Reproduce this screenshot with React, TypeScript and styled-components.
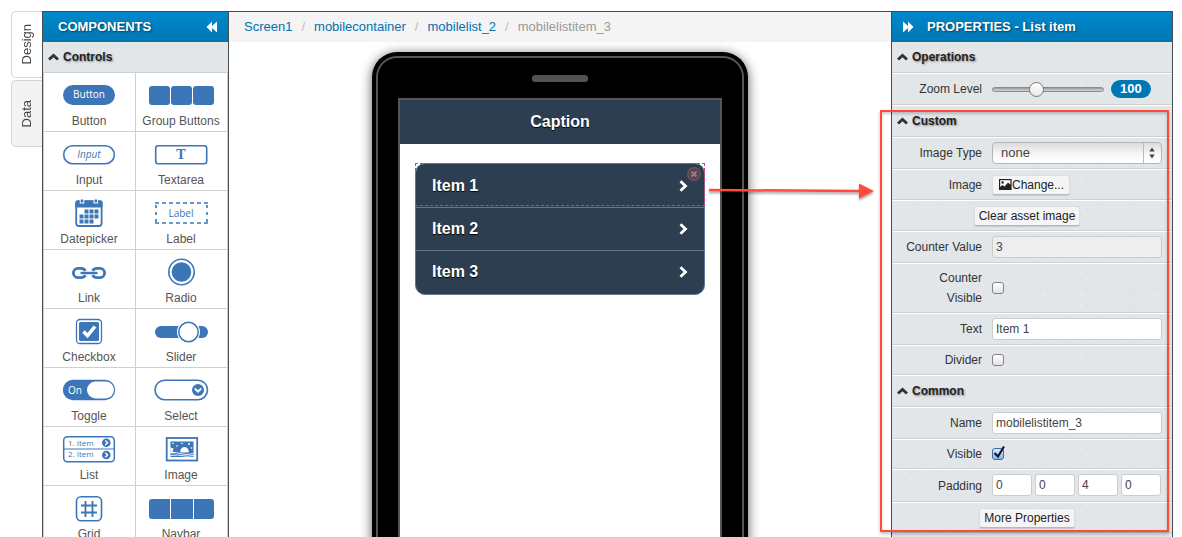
import React, { useState } from "react";
import styled, { createGlobalStyle, css } from "styled-components";

const blue = "#3c76b8";
const line = "#cfcfcf";
const dark = "#454c52";
const navy = "#2d3e50";
const red = "#ff4b38";

const GlobalStyle = createGlobalStyle`
  *, *::before, *::after { box-sizing: border-box; }
  body {
    margin: 0;
    background: #fff;
    color: #333;
    font: 12px/20px "Liberation Sans", Arial, Helvetica, sans-serif;
  }
  button, input, select { font: inherit; color: inherit; margin: 0; }
  button { padding: 0; border: 0; background: none; cursor: pointer; }
  ul, ol, h1, h2, h3 { margin: 0; padding: 0; list-style: none; font-size: inherit; }
  svg { display: block; }
`;

const Shell = styled.div`
  display: flex;
  height: 100vh;
  padding: 11px 9px 0 11px;
  overflow: hidden;
`;

const SideTabs = styled.nav`
  display: flex;
  flex-direction: column;
  gap: 2px;
  flex: 0 0 31px;
`;

const SideTab = styled.button<{ $active?: boolean }>`
  display: flex;
  align-items: center;
  justify-content: center;
  height: 67px;
  border: 1px solid #d6d6d6;
  border-right: 0;
  border-radius: 5px 0 0 5px;
  background: ${(p) => (p.$active ? "#fff" : "#f3f3f3")};
  color: #444;
  font-size: 13px;

  span {
    writing-mode: vertical-rl;
    transform: rotate(180deg);
  }
`;

const Workspace = styled.div`
  display: flex;
  flex: 1;
  min-width: 0;
  border: 1px solid ${dark};
  border-bottom: 0;
`;

const Panel = styled.section`
  position: relative;
  display: flex;
  flex-direction: column;
  min-height: 0;
`;

const ComponentsPanel = styled(Panel)`
  flex: 0 0 186px;
  overflow: hidden;
  border-right: 1px solid ${dark};
`;

const PropertiesPanel = styled(Panel)`
  flex: 0 0 281px;
  border-left: 1px solid ${dark};
  background: #e2e6e9;
`;

const PanelHeader = styled.header`
  display: flex;
  align-items: center;
  flex: 0 0 30px;
  gap: 13px;
  padding: 0 10px;
  background: linear-gradient(#0088cc, #0077b3);
  color: #fff;
  font-size: 13px;

  h2 { text-shadow: 1px 1px 2px rgba(0, 0, 0, 0.5); }
`;

const ComponentsHeader = styled(PanelHeader)`
  justify-content: space-between;
  padding: 0 10px 0 15px;
`;

const SectionTitle = styled.h3<{ $first?: boolean }>`
  flex: none;
  background: #e3e6e9;
  border-top: ${(p) => (p.$first ? "0" : "1px solid #fff")};
  border-bottom: 1px solid ${line};

  button {
    display: flex;
    align-items: center;
    gap: 4px;
    width: 100%;
    height: 30px;
    padding: 0 5px;
    color: #222;
    font-weight: bold;
    text-shadow: 1px 1px 2px rgba(0, 0, 0, 0.4);
  }
`;

const ComponentGrid = styled.div`
  display: grid;
  grid-template-columns: 92px 1fr;
  border: solid ${line};
  border-width: 0 1px;
`;

const ComponentCell = styled.button`
  display: flex;
  flex-direction: column;
  align-items: center;
  gap: 2px;
  height: 59px;
  padding: 8px 1px 0 0;
  border-bottom: 1px solid ${line};
  color: #555;
  white-space: nowrap;

  &:nth-child(odd) { border-right: 1px solid ${line}; }
`;

const Canvas = styled.main`
  display: flex;
  flex-direction: column;
  flex: 1;
  min-width: 0;
  overflow: hidden;
`;

const Breadcrumb = styled.ol`
  display: flex;
  flex: 0 0 30px;
  align-items: center;
  padding: 0 15px;
  background: #f4f4f4;
  color: #999;
  font-size: 13px;

  li + li::before {
    content: "/";
    padding: 0 9px;
    color: #bbb;
  }
  a { color: #0071b0; text-decoration: none; }
`;

const Stage = styled.div`
  display: flex;
  justify-content: center;
  align-items: flex-start;
  flex: 1;
  min-height: 0;
  padding-top: 10px;
`;

const Phone = styled.div`
  flex: 0 0 376px;
  padding: 4px;
  border-radius: 25px;
  background: #000;
  box-shadow: 0 2px 12px rgba(0, 0, 0, 0.65);
`;

const PhoneBezel = styled.div`
  display: flex;
  flex-direction: column;
  align-items: center;
  gap: 16px;
  padding: 17px 20px 60px;
  border: 2px solid #565656;
  border-radius: 21px;
`;

const Speaker = styled.div`
  width: 56px;
  height: 7px;
  border-radius: 3px;
  background: #525252;
`;

const Screen = styled.div`
  align-self: stretch;
  min-height: 480px;
  border: 2px solid #565656;
  background: #fff;
`;

const Caption = styled.h1`
  background: ${navy};
  color: #fff;
  font-size: 16px;
  line-height: 44px;
  text-align: center;
  text-shadow: 0 1px 1px #000;
`;

const ScreenBody = styled.div`
  padding: 19px 15px;
`;

const MobileList = styled.ul`
  position: relative;
  padding: 1px 0;
  border: 1px solid #5c7a95;
  border-radius: 10px;
  background: ${navy};
`;

const MobileItem = styled.li`
  & + & { border-top: 1px solid #5c7a95; }

  a {
    display: flex;
    align-items: center;
    justify-content: space-between;
    height: 42px;
    padding: 0 16px;
    color: #fff;
    font-size: 16px;
    font-weight: bold;
    text-decoration: none;
    text-shadow: 0 1px 1px #000;
  }
`;

const Selection = styled.div`
  position: absolute;
  inset: -1px -1px auto;
  height: 43px;
  border: 1px dashed #d43a86;
  pointer-events: none;
`;

const RemoveBadge = styled.button`
  position: absolute;
  top: 3px;
  right: 3px;
  opacity: 0.5;
  pointer-events: auto;
`;

const Row = styled.div<{ $centered?: boolean }>`
  display: flex;
  flex: none;
  align-items: center;
  gap: 10px;
  padding: 4px 10px 4px 12px;
  border-top: 1px solid #fff;
  border-bottom: 1px solid ${line};
  background:
    radial-gradient(circle, #dee2e8 0 1px, transparent 2px) 0 0 / 23px 17px,
    radial-gradient(circle, #dfe3e8 0 1px, transparent 2px) 5px 9px / 31px 13px,
    radial-gradient(circle, #e6e9ec 0 1px, transparent 2px) 9px 3px / 19px 11px,
    #e2e6e9;
  ${(p) => p.$centered && css`
    justify-content: center;
    padding-left: 0;
  `}
`;

const RowLabel = styled.label`
  flex: 0 0 78px;
  text-align: right;
`;

const field = css`
  height: 22px;
  border: 1px solid #ccc;
  border-radius: 3px;
  background: #fff;
  color: #444;
`;

const TextField = styled.input`
  ${field}
  flex: 1;
  min-width: 0;
  padding: 0 3px;
  &:disabled { background: #eee; }
`;

const PaddingFields = styled.div`
  display: grid;
  grid-template-columns: repeat(4, 40px);
  gap: 3px;
  padding-bottom: 1px;
`;

const SelectWrap = styled.div`
  position: relative;
  flex: 1;

  select {
    ${field}
    width: 100%;
    padding: 0 8px;
    appearance: none;
    border-color: #b5b5b5;
    border-radius: 4px;
    background: linear-gradient(#dcdcdc, #f8f8f8 60%, #fff);
    font-size: 13px;
  }
  svg {
    position: absolute;
    top: 1px;
    right: 1px;
    pointer-events: none;
  }
`;

const PushButton = styled.button`
  display: flex;
  align-items: center;
  height: 20px;
  padding: 0 4px;
  border: 1px solid #dcdcdc;
  border-bottom-color: #b9b9b9;
  border-radius: 3px;
  background: #f5f5f5;
  color: #222;
  white-space: nowrap;
  box-shadow: 0 1px 1px rgba(0, 0, 0, 0.12);
`;

const ImageButton = styled(PushButton)`
  padding: 0 5px 0 6px;
`;

const ButtonSlot = styled.div`
  display: flex;
  align-items: center;
  height: 21px;
`;

const CheckWrap = styled.span`
  position: relative;
  display: block;
  height: 12px;

  input {
    display: block;
    width: 12px;
    height: 12px;
    appearance: none;
    border: 1px solid #858585;
    border-radius: 3px;
    background: linear-gradient(#fff, #e4e4e4);
  }
  input:checked {
    border-color: #47689a;
    background: linear-gradient(#dcebfa, #86b8ec);
  }
  svg {
    position: absolute;
    left: 1px;
    bottom: 1px;
    pointer-events: none;
  }
`;

const ZoomSlot = styled.div`
  display: flex;
  align-items: center;
  gap: 7px;
  height: 22px;
`;

const thumb = css`
  appearance: none;
  box-sizing: border-box;
  width: 15px;
  height: 15px;
  margin-top: -6px;
  border: 1px solid #777;
  border-radius: 50%;
  background: linear-gradient(#fff, #e9e9e9);
`;

const Range = styled.input`
  width: 112px;
  height: 15px;
  appearance: none;
  background: transparent;

  &::-webkit-slider-runnable-track {
    height: 5px;
    border: 1px solid #8b8b8b;
    border-radius: 3px;
    background: linear-gradient(#9a9a9a, #d8d8d8);
  }
  &::-webkit-slider-thumb { ${thumb} }
`;

const ZoomValue = styled.output`
  padding: 0 9px;
  border-radius: 9px;
  background: #0077b3;
  color: #fff;
  font-size: 13px;
  font-weight: bold;
  line-height: 18px;
`;

const Callout = styled.div`
  position: absolute;
  top: 98px;
  left: -12px;
  right: 3px;
  height: 422px;
  border: 2px solid ${red};
  box-shadow: 0 2px 3px rgba(0, 0, 0, 0.25), inset 0 2px 3px rgba(0, 0, 0, 0.2);
  pointer-events: none;
`;

const CalloutArrow = styled.svg`
  position: absolute;
  top: 168px;
  left: -183px;
  filter: drop-shadow(0 2px 1px rgba(0, 0, 0, 0.35));
  pointer-events: none;
`;

const openSans = '"Open Sans", sans-serif';

const glyphs: Record<string, React.ReactNode> = {
  Button: (
    <>
      <rect x="7" y="4" width="52" height="20" rx="10" fill={blue} />
      <text x="33" y="17" textAnchor="middle" fontFamily={openSans} fontSize="10" fill="#fff">Button</text>
    </>
  ),
  "Group Buttons": (
    <g fill={blue}>
      <rect x="1" y="5" width="21" height="19" rx="3" />
      <rect x="23" y="5" width="21" height="19" rx="3" />
      <rect x="45" y="5" width="21" height="19" rx="3" />
    </g>
  ),
  Input: (
    <>
      <rect x="7.7" y="5.7" width="50.6" height="18" rx="9" fill="none" stroke={blue} strokeWidth="1.6" />
      <text x="33" y="18" textAnchor="middle" fontFamily={openSans} fontSize="10" fontStyle="italic" fill={blue}>Input</text>
    </>
  ),
  Textarea: (
    <>
      <rect x="7.7" y="5.7" width="51" height="18" rx="2.5" fill="none" stroke={blue} strokeWidth="1.6" />
      <text x="33" y="19" textAnchor="middle" fontFamily='"Liberation Serif", serif' fontSize="14" fontWeight="bold" fill={blue}>T</text>
    </>
  ),
  Datepicker: (
    <>
      <rect x="20.200" y="2.500" width="25.400" height="24.500" rx="2.800" fill="#fff" stroke={blue} strokeWidth="1.800" />
      <path d="M19.300 8.500V3.200a2 2 0 0 1 2-2h23.200a2 2 0 0 1 2 2v5.300z" fill={blue} />
      <g stroke="#fff" strokeWidth="4.600"><path d="M26 0v4.500M39.800 0v4.500" /></g>
      <g stroke={blue} strokeWidth="2.600"><path d="M26 .5v3M39.800 .5v3" /></g>
      <g fill={blue}>
        {[28.5, 33.5, 38.5].map((x) => <rect key={x} x={x} y="10.500" width="4" height="4" />)}
        {[23.5, 28.5, 33.5, 38.5].map((x) => <rect key={x} x={x} y="15.500" width="4" height="4" />)}
        {[23.5, 28.5, 33.5].map((x) => <rect key={x} x={x} y="20.500" width="4" height="4" />)}
      </g>
    </>
  ),
  Label: (
    <>
      <path d="M7 4H60M7 24H60" stroke={blue} strokeWidth="1.600" strokeDasharray="4 3" />
      <path d="M8 6V23M59 6V23" stroke={blue} strokeWidth="1.600" strokeDasharray="3 4" />
      <text x="33" y="18" textAnchor="middle" fontFamily={openSans} fontSize="10" fill={blue}>Label</text>
    </>
  ),
  Link: (
    <g fill="none" stroke={blue} strokeWidth="2.800">
      <path d="M29.500 12.800Q28 10.400 25 10.400H22A4.600 4.600 0 0 0 22 19.600H25Q28 19.600 29.500 17.200" />
      <path d="M36.500 12.800Q38 10.400 41 10.400H44A4.600 4.600 0 0 1 44 19.600H41Q38 19.600 36.500 17.200" />
      <path d="M25.500 15H40.500" strokeWidth="2.400" strokeLinecap="round" />
    </g>
  ),
  Radio: (
    <>
      <circle cx="33.5" cy="14" r="12.700" fill="none" stroke={blue} strokeWidth="1.6" />
      <circle cx="33.5" cy="14" r="9.800" fill={blue} />
    </>
  ),
  Checkbox: (
    <>
      <rect x="20.500" y="2.500" width="25" height="24" rx="3.500" fill="none" stroke={blue} strokeWidth="1.300" />
      <rect x="23" y="5" width="20" height="19" rx="1.500" fill={blue} />
      <path d="M27.500 14.500l4 4.200 7.500-9.200" fill="none" stroke="#fff" strokeWidth="3.500" />
    </>
  ),
  Slider: (
    <>
      <rect x="7" y="9" width="53" height="12" rx="6" fill={blue} />
      <circle cx="40.500" cy="15" r="11.500" fill="#fff" />
      <circle cx="40.500" cy="15" r="9.700" fill="#fff" stroke={blue} strokeWidth="1.500" />
    </>
  ),
  Toggle: (
    <>
      <rect x="7.500" y="4.500" width="51" height="19" rx="9.500" fill={blue} stroke={blue} strokeWidth="1.300" />
      <rect x="31" y="5.500" width="27" height="17" rx="8.500" fill="#fff" />
      <text x="12" y="18" fontFamily={openSans} fontSize="10" fill="#fff">On</text>
    </>
  ),
  Select: (
    <>
      <rect x="7" y="4.200" width="52.500" height="19.500" rx="9.700" fill="none" stroke={blue} strokeWidth="1.600" />
      <circle cx="50" cy="14" r="6" fill={blue} />
      <path d="M46.800 12.500l3.200 3.200 3.200-3.200" fill="none" stroke="#fff" strokeWidth="1.800" />
    </>
  ),
  List: (
    <>
      <rect x="7.700" y="1.700" width="50.600" height="25" rx="3.500" fill="none" stroke={blue} strokeWidth="1.500" />
      <path d="M8 14H58" stroke={blue} strokeWidth="1" />
      <text x="12" y="11" fontFamily={openSans} fontSize="8" fill={blue}>1. Item</text>
      <text x="12" y="22" fontFamily={openSans} fontSize="8" fill={blue}>2. Item</text>
      <circle cx="50.300" cy="7.800" r="4.300" fill={blue} />
      <circle cx="50.300" cy="20" r="4.300" fill={blue} />
      <path d="M49.300 5.500l2.300 2.300-2.300 2.300M49.300 17.700l2.300 2.300-2.300 2.300" fill="none" stroke="#fff" strokeWidth="1.400" />
    </>
  ),
  Image: (
    <>
      <rect x="18.700" y="3" width="30.500" height="22.500" fill="none" stroke={blue} strokeWidth="1.800" />
      <rect x="22.500" y="6.500" width="23" height="15.500" fill={blue} />
      <g fill="#fff">
        <path d="M32.500 17.500a4.200 4.200 0 1 1 8 0z" />
        <circle cx="25" cy="8.500" r=".8" />
        <circle cx="29" cy="11" r=".8" />
        <circle cx="34" cy="8.500" r=".8" />
        <circle cx="41" cy="9" r="1" />
        <circle cx="43.500" cy="13" r=".8" />
        <path d="M22.500 12.500l3 1-1 3 4 1.500h-6z" />
      </g>
      <path d="M22.500 18q6-1 11 .8t12-.3M22.500 20.500q8-1 12 .2t11-.2" fill="none" stroke="#fff" strokeWidth=".9" />
    </>
  ),
  Grid: (
    <g fill="none" stroke={blue}>
      <rect x="20.500" y="2.700" width="25" height="24" rx="4.500" strokeWidth="1.600" />
      <path d="M29.500 7v16M36.500 7v16M25 11.500h16M25 18.500h16" strokeWidth="1.800" />
    </g>
  ),
  Navbar: (
    <>
      <rect x="1" y="5" width="65" height="20" rx="3" fill={blue} />
      <path d="M22.500 5v20M45.500 5v20" stroke="#fff" strokeWidth="1" />
    </>
  ),
};

const DoubleChevron = ({ flip }: { flip?: boolean }) => (
  <svg width="12" height="12" viewBox="0 0 12 12" fill="#fff" aria-hidden="true">
    <path d={flip ? "M1 .5l5 4.500V.5L11.500 6 6 11.500V7L1 11.500z" : "M11 .5L6 5V.5L.5 6 6 11.500V7l5 4.500z"} />
  </svg>
);

const Section = ({ title, first }: { title: string; first?: boolean }) => (
  <SectionTitle $first={first}>
    <button type="button">
      <svg width="11" height="8" viewBox="0 0 11 8" aria-hidden="true">
        <path d="M1 6.500L5.500 2.500 10 6.500" fill="none" stroke="#333" strokeWidth="3" />
      </svg>
      {title}
    </button>
  </SectionTitle>
);

const Check = ({ id, initial = false }: { id: string; initial?: boolean }) => {
  const [checked, setChecked] = useState(initial);
  return (
    <CheckWrap>
      <input id={id} type="checkbox" checked={checked} onChange={(e) => setChecked(e.target.checked)} />
      {checked && (
        <svg width="13" height="14" viewBox="0 0 13 14" aria-hidden="true">
          <path d="M1.500 8l3.500 3.500L11 1.500" fill="none" stroke="#111b2e" strokeWidth="2.200" />
        </svg>
      )}
    </CheckWrap>
  );
};

export default function App() {
  const [zoom, setZoom] = useState(100);
  return (
    <>
      <GlobalStyle />
      <Shell>
        <SideTabs>
          <SideTab type="button" $active><span>Design</span></SideTab>
          <SideTab type="button"><span>Data</span></SideTab>
        </SideTabs>

        <Workspace>
          <ComponentsPanel>
            <ComponentsHeader>
              <h2>COMPONENTS</h2>
              <button type="button" aria-label="Collapse components"><DoubleChevron /></button>
            </ComponentsHeader>
            <Section title="Controls" first />
            <ComponentGrid>
              {Object.entries(glyphs).map(([name, glyph]) => (
                <ComponentCell key={name} type="button">
                  <svg width="66" height="28" viewBox="0 0 66 28" aria-hidden="true">{glyph}</svg>
                  {name}
                </ComponentCell>
              ))}
            </ComponentGrid>
          </ComponentsPanel>

          <Canvas>
            <Breadcrumb>
              <li><a href="#screen1">Screen1</a></li>
              <li><a href="#mobilecontainer">mobilecontainer</a></li>
              <li><a href="#mobilelist_2">mobilelist_2</a></li>
              <li>mobilelistitem_3</li>
            </Breadcrumb>
            <Stage>
              <Phone>
                <PhoneBezel>
                  <Speaker />
                  <Screen>
                    <Caption>Caption</Caption>
                    <ScreenBody>
                      <MobileList>
                        {["Item 1", "Item 2", "Item 3"].map((item) => (
                          <MobileItem key={item}>
                            <a href="#item">
                              {item}
                              <svg width="9" height="12" viewBox="0 0 9 12" aria-hidden="true">
                                <path d="M1.500 1.200L6.500 6l-5 4.800" fill="none" stroke="#fff" strokeWidth="2.800" />
                              </svg>
                            </a>
                          </MobileItem>
                        ))}
                        <Selection>
                          <RemoveBadge type="button" aria-label="Remove item">
                            <svg width="14" height="14" viewBox="0 0 14 14" aria-hidden="true">
                              <circle cx="7" cy="7" r="6.300" fill="#b0303a" stroke="#8c7f88" strokeWidth="1.200" />
                              <path d="M4.500 4.500l5 5M9.500 4.500l-5 5" stroke="#ccc" strokeWidth="2.200" />
                            </svg>
                          </RemoveBadge>
                        </Selection>
                      </MobileList>
                    </ScreenBody>
                  </Screen>
                </PhoneBezel>
              </Phone>
            </Stage>
          </Canvas>

          <PropertiesPanel>
            <PanelHeader>
              <button type="button" aria-label="Collapse properties"><DoubleChevron flip /></button>
              <h2>PROPERTIES - List item</h2>
            </PanelHeader>

            <Section title="Operations" first />
            <Row>
              <RowLabel htmlFor="zoom">Zoom Level</RowLabel>
              <ZoomSlot>
                <Range id="zoom" type="range" min="20" max="230" value={zoom} onChange={(e) => setZoom(Number(e.target.value))} />
                <ZoomValue htmlFor="zoom">{zoom}</ZoomValue>
              </ZoomSlot>
            </Row>

            <Section title="Custom" />
            <Row>
              <RowLabel htmlFor="image-type">Image Type</RowLabel>
              <SelectWrap>
                <select id="image-type" defaultValue="none">
                  <option value="none">none</option>
                </select>
                <svg width="18" height="20" viewBox="0 0 18 20" aria-hidden="true">
                  <path d="M.5 0v20" stroke="#bbb" />
                  <path d="M9 4.500l2.700 4H6.300zM9 15.500l2.700-4H6.300z" fill="#444" />
                </svg>
              </SelectWrap>
            </Row>
            <Row>
              <RowLabel htmlFor="image">Image</RowLabel>
              <ButtonSlot>
                <ImageButton id="image" type="button">
                  <svg width="13" height="11" viewBox="0 0 13 11" aria-hidden="true">
                    <rect x=".6" y=".6" width="11.400" height="9.800" fill="#fff" stroke="#222" strokeWidth="1.200" />
                    <circle cx="3.600" cy="3.500" r="1.200" fill="#222" />
                    <path d="M1 10V8l2.500-2 2 1.500L9 3.500 12 6v4z" fill="#222" />
                  </svg>
                  Change...
                </ImageButton>
              </ButtonSlot>
            </Row>
            <Row $centered>
              <ButtonSlot><PushButton type="button">Clear asset image</PushButton></ButtonSlot>
            </Row>
            <Row>
              <RowLabel htmlFor="counter-value">Counter Value</RowLabel>
              <TextField id="counter-value" defaultValue="3" disabled />
            </Row>
            <Row>
              <RowLabel htmlFor="counter-visible">Counter Visible</RowLabel>
              <Check id="counter-visible" />
            </Row>
            <Row>
              <RowLabel htmlFor="text">Text</RowLabel>
              <TextField id="text" defaultValue="Item 1" />
            </Row>
            <Row>
              <RowLabel htmlFor="divider">Divider</RowLabel>
              <Check id="divider" />
            </Row>

            <Section title="Common" />
            <Row>
              <RowLabel htmlFor="name">Name</RowLabel>
              <TextField id="name" defaultValue="mobilelistitem_3" />
            </Row>
            <Row>
              <RowLabel htmlFor="visible">Visible</RowLabel>
              <Check id="visible" initial />
            </Row>
            <Row>
              <RowLabel htmlFor="padding-top">Padding</RowLabel>
              <PaddingFields>
                <TextField id="padding-top" aria-label="Padding top" defaultValue="0" />
                <TextField aria-label="Padding right" defaultValue="0" />
                <TextField aria-label="Padding bottom" defaultValue="4" />
                <TextField aria-label="Padding left" defaultValue="0" />
              </PaddingFields>
            </Row>
            <Row $centered>
              <ButtonSlot><PushButton type="button">More Properties</PushButton></ButtonSlot>
            </Row>

            <Callout />
            <CalloutArrow width="166" height="22" viewBox="0 0 166 22" aria-hidden="true">
              <path d="M0 10l152 1" stroke={red} strokeWidth="2.500" />
              <path d="M150 3.500l15 7.500-15 7.500z" fill={red} />
            </CalloutArrow>
          </PropertiesPanel>
        </Workspace>
      </Shell>
    </>
  );
}
